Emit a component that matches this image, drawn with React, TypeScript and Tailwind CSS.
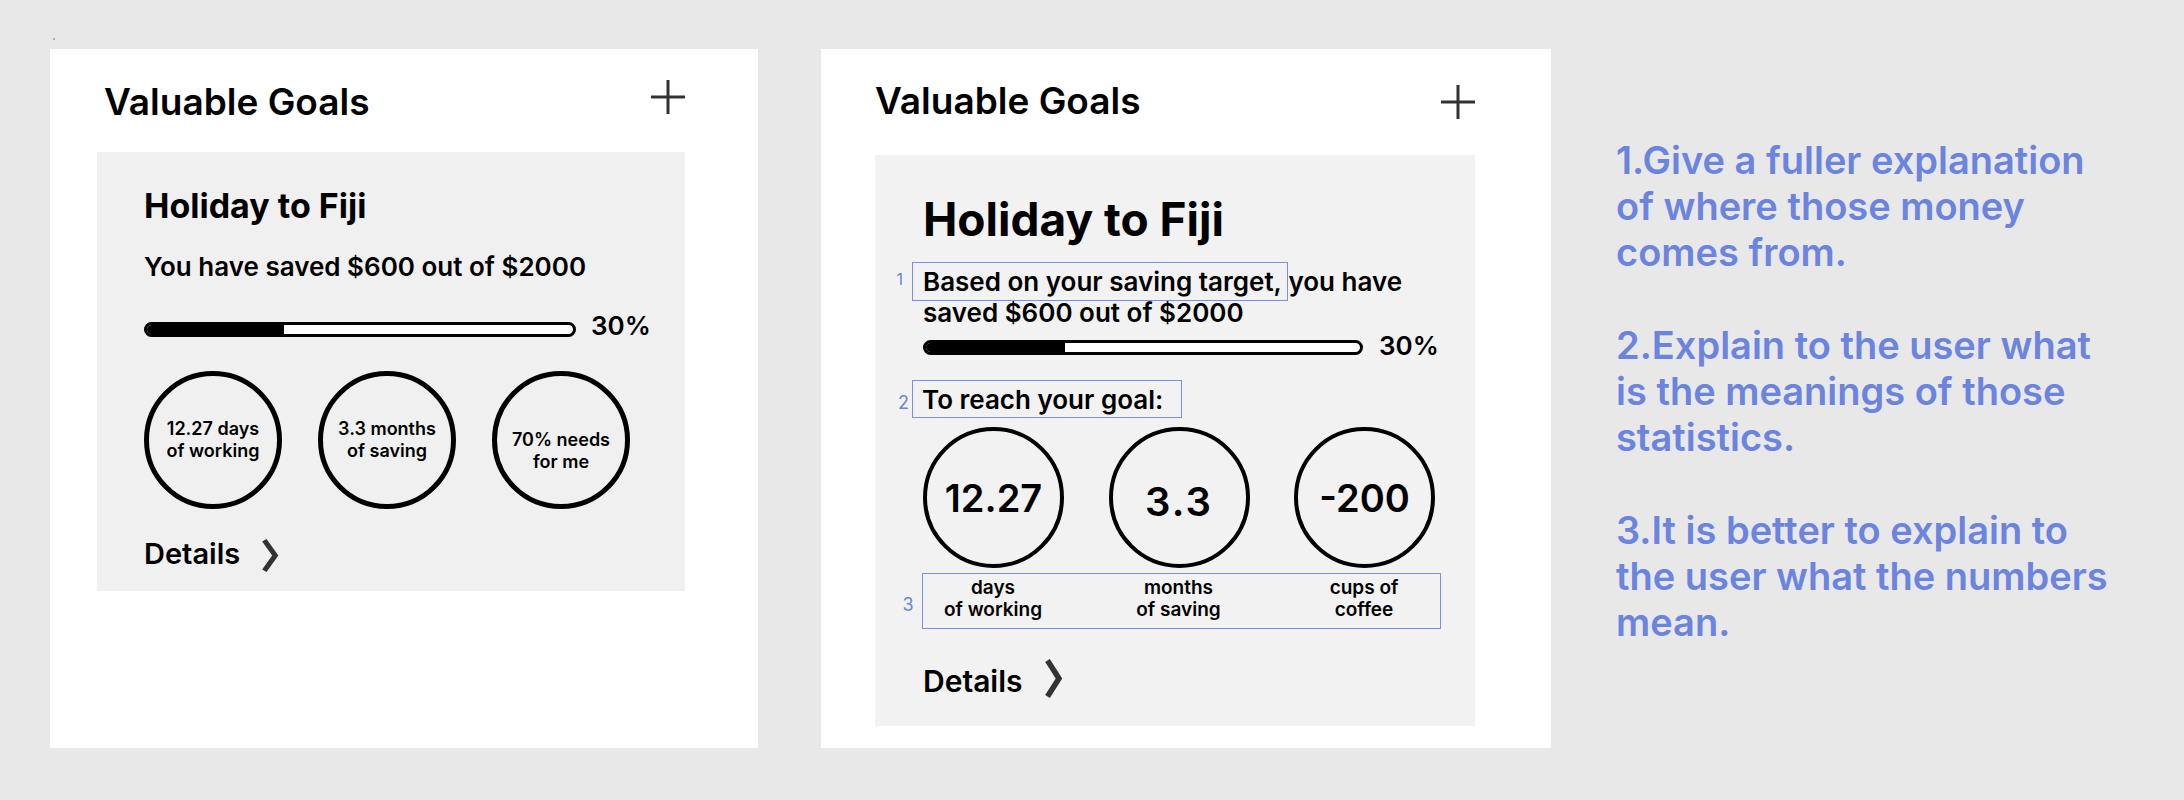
import React from "react";

function Plus({ className = "" }: { className?: string }) {
  return (
    <svg width="34" height="34" viewBox="0 0 34 34" className={className}>
      <path d="M17 0V34M0 17H34" stroke="#333333" strokeWidth="3" fill="none" />
    </svg>
  );
}

function Chevron({ w, h, className = "" }: { w: number; h: number; className?: string }) {
  return (
    <svg width={w} height={h} viewBox="0 0 19 39" preserveAspectRatio="none" className={className}>
      <polyline
        points="2.5,1.5 14,19.5 2.5,37.5"
        stroke="#333333"
        strokeWidth="5.5"
        strokeLinejoin="miter"
        strokeLinecap="butt"
        fill="none"
      />
    </svg>
  );
}

function LeftPanel() {
  const circles = [
    { a: "12.27 days", b: "of working", extra: "" },
    { a: "3.3 months", b: "of saving", extra: "" },
    { a: "70% needs", b: "for me", extra: "pt-[22px]" },
  ];
  return (
    <div className="w-[708px] h-[699px] shrink-0 bg-white flex flex-col pt-[31px] pl-[47px] pr-[73px]">
      <div className="flex items-start justify-between pl-[7px]">
        <h2 className="text-[37px] leading-[44px] font-semibold text-black">Valuable Goals</h2>
        <Plus />
      </div>
      <div className="mt-[28px] h-[439px] bg-[#f0f0f0] pl-[47px] pt-[34px] flex flex-col text-black">
        <h3 className="text-[34px] leading-[40px] font-bold">Holiday to Fiji</h3>
        <p className="mt-[25px] text-[26px] leading-[32px] font-semibold whitespace-nowrap">
          You have saved $600 out of $2000
        </p>
        <div className="mt-[27px] flex items-start">
          <div className="mt-[12px] w-[432px] h-[15px] rounded-full border-[3px] border-black bg-white overflow-hidden flex">
            <div className="w-[137px] h-full bg-black" />
          </div>
          <span className="ml-[15px] text-[26px] leading-[32px] font-semibold">30%</span>
        </div>
        <div className="mt-[29px] flex gap-[36px]">
          {circles.map((c) => (
            <div
              key={c.a}
              className={`w-[138px] h-[138px] rounded-full border-[5px] border-black flex flex-col items-center justify-center text-center text-[18px] leading-[22px] font-semibold ${c.extra}`}
            >
              <span className="whitespace-nowrap">{c.a}</span>
              <span className="whitespace-nowrap">{c.b}</span>
            </div>
          ))}
        </div>
        <div className="mt-[28px] flex items-start">
          <span className="text-[29px] leading-[34px] font-semibold">Details</span>
          <Chevron w={18} h={33} className="ml-[22px] mt-[2px]" />
        </div>
      </div>
    </div>
  );
}

function RightPanel() {
  const stats = [
    { n: "12.27", cls: "text-[38px]", l1: "days", l2: "of working" },
    { n: "3.3", cls: "text-[40px] tracking-[2px] pt-[9px]", l1: "months", l2: "of saving" },
    { n: "-200", cls: "text-[38px]", l1: "cups of", l2: "coffee" },
  ];
  return (
    <div className="ml-[63px] w-[730px] h-[699px] shrink-0 bg-white flex flex-col pt-[30px] pl-[54px] pr-[76px]">
      <div className="flex items-start justify-between">
        <h2 className="text-[37px] leading-[44px] font-semibold text-black">Valuable Goals</h2>
        <Plus className="mt-[6px]" />
      </div>
      <div className="mt-[32px] h-[571px] bg-[#f2f2f2] pl-[48px] pt-[37px] flex flex-col text-black">
        <h3 className="text-[46px] leading-[54px] font-bold">Holiday to Fiji</h3>
        <p className="mt-[20px] text-[26px] leading-[31px] font-semibold whitespace-nowrap">
          <span className="relative">
            Based on your saving target,
            <span className="absolute -left-[11px] -top-[4.5px] -bottom-[4px] -right-[6px] border-[1.5px] border-[#7b8fe6]">
              <span className="absolute right-full mr-[10px] top-[7px] text-[16px] leading-[18px] font-normal text-[#6b84e0]">
                1
              </span>
            </span>
          </span>{" "}
          you have
          <br />
          saved $600 out of $2000
        </p>
        <div className="mt-[2px] flex items-start">
          <div className="mt-[10px] w-[440px] h-[15px] rounded-full border-[3px] border-black bg-white overflow-hidden flex">
            <div className="w-[139px] h-full bg-black" />
          </div>
          <span className="ml-[16px] text-[26px] leading-[32px] font-semibold">30%</span>
        </div>
        <div className="mt-[18px] self-start -ml-[11px] relative border-[1.5px] border-[#7b8fe6] pl-[9px] pr-[18px] pt-[3px] pb-[1px]">
          <span className="absolute right-full mr-[4px] top-[12px] text-[18px] leading-[20px] font-normal text-[#6b84e0]">
            2
          </span>
          <span className="text-[26px] leading-[32px] font-semibold whitespace-nowrap">To reach your goal:</span>
        </div>
        <div className="mt-[9px] flex gap-[44.5px]">
          {stats.map((s) => (
            <div
              key={s.n}
              className="w-[141px] h-[141px] rounded-full border-[4.5px] border-black flex items-center justify-center"
            >
              <span className={`${s.cls} leading-none font-semibold`}>{s.n}</span>
            </div>
          ))}
        </div>
        <div className="mt-[5px] self-start -ml-[1.5px] relative border-[1.5px] border-[#7b8fe6] pr-[5px] pt-[3px] pb-[7px] grid grid-cols-[141px_141px_141px] gap-x-[44.5px]">
          <span className="absolute right-full mr-[9px] top-[21px] text-[18px] leading-[20px] font-normal text-[#6b84e0]">
            3
          </span>
          {stats.map((s) => (
            <div key={s.l1} className="flex flex-col items-center text-center text-[19px] leading-[22px] font-semibold">
              <span className="whitespace-nowrap">{s.l1}</span>
              <span className="whitespace-nowrap">{s.l2}</span>
            </div>
          ))}
        </div>
        <div className="mt-[34px] flex items-start">
          <span className="text-[30px] leading-[36px] font-semibold">Details</span>
          <Chevron w={19} h={39} className="ml-[22px] -mt-[4px]" />
        </div>
      </div>
    </div>
  );
}

function Notes() {
  const paras = [
    ["1.Give a fuller explanation", "of where those money", "comes from."],
    ["2.Explain to the user what", "is the meanings of those", "statistics."],
    ["3.It is better to explain to", "the user what the numbers", "mean."],
  ];
  return (
    <div className="ml-[65px] mt-[88px] flex flex-col gap-[46.2px] text-[38px] leading-[46.2px] font-semibold text-[#6b84e0]">
      {paras.map((p) => (
        <p key={p[0]} className="whitespace-nowrap">
          {p.map((line, i) => (
            <React.Fragment key={line}>
              {i > 0 && <br />}
              {line}
            </React.Fragment>
          ))}
        </p>
      ))}
    </div>
  );
}

export default function App() {
  return (
    <div className="relative w-[2184px] h-[800px] overflow-hidden bg-[#e8e8e8] flex items-start pt-[49px] pl-[50px] font-['Inter','Noto_Sans',sans-serif]">
      <span className="absolute left-[53px] top-[38px] w-[2px] h-[2px] rounded-full bg-[#9a9a9a]" />
      <LeftPanel />
      <RightPanel />
      <Notes />
    </div>
  );
}
